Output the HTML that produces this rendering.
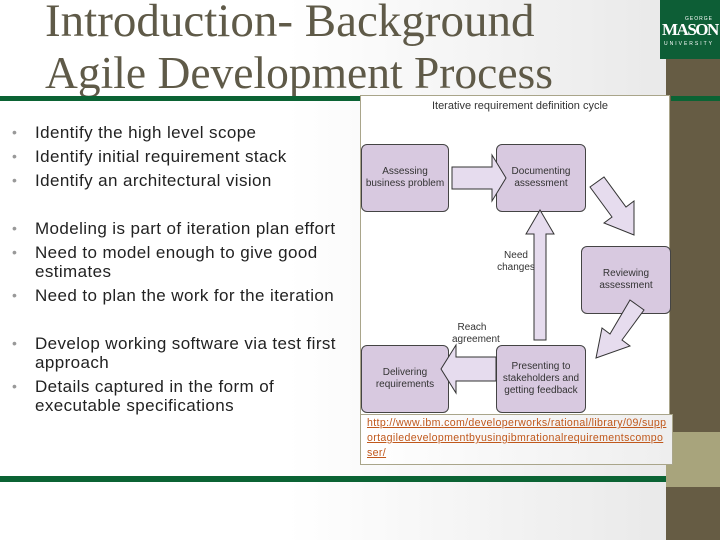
<!DOCTYPE html>
<html><head><meta charset="utf-8"><style>
body{margin:0;width:720px;height:540px;position:relative;overflow:hidden;background:linear-gradient(90deg,#fff 0%,#fff 40%,#e6e6e6 100%);font-family:"Liberation Sans",sans-serif}
.a{position:absolute}
.t{font-family:"Liberation Serif",serif;font-size:45.5px;color:#5f5a48;left:45px;line-height:50px;white-space:nowrap}
.b{position:absolute;left:35px;font-size:17px;letter-spacing:0.4px;color:#222;line-height:19px;width:325px}
.b:before{content:"•";position:absolute;left:-23px;color:#999;font-size:14px}
.box{position:absolute;background:#d8c9e0;border:1px solid #444;border-radius:6px;font-size:10px;text-align:center;color:#333;display:flex;align-items:center;justify-content:center;line-height:12px}
.lbl{position:absolute;font-size:10px;color:#333;text-align:center;line-height:12px}
</style></head><body>
<div class="a t" style="top:-4px;font-size:47px">Introduction- Background</div>
<div class="a t" style="top:48px">Agile Development Process</div>
<div class="a" style="left:0;top:96px;width:362px;height:5px;background:#0b6334"></div>
<div class="a" style="left:660px;top:0;width:60px;height:59px;background:#0d5e36"></div>
<div class="a" style="left:662px;top:20px;color:#fff;font-family:'Liberation Serif',serif;font-weight:bold;font-size:17px;letter-spacing:-1.5px">MASON</div>
<div class="a" style="left:685px;top:16px;color:#fff;font-size:5px;letter-spacing:1px">GEORGE</div>
<div class="a" style="left:664px;top:41px;color:#fff;font-size:5px;letter-spacing:2px">UNIVERSITY</div>
<div class="a" style="left:666px;top:59px;width:54px;height:481px;background:#665c44"></div>
<div class="a" style="left:666px;top:432px;width:54px;height:55px;background:#a8a47c"></div>
<div class="a" style="left:671px;top:96px;width:49px;height:5px;background:#0b6334"></div>
<div class="a" style="left:0;top:476px;width:666px;height:6px;background:#0b6334"></div>

<div class="b" style="top:123px">Identify the high level scope</div>
<div class="b" style="top:147px">Identify initial requirement stack</div>
<div class="b" style="top:171px">Identify an architectural vision</div>
<div class="b" style="top:219px">Modeling is part of iteration plan effort</div>
<div class="b" style="top:243px">Need to model enough to give good estimates</div>
<div class="b" style="top:286px">Need to plan the work for the iteration</div>
<div class="b" style="top:334px">Develop working software via test first approach</div>
<div class="b" style="top:377px">Details captured in the form of executable specifications</div>

<div class="a" style="left:360px;top:95px;width:308px;height:318px;background:#fff;border:1px solid #a9a58a"></div>
<div class="lbl" style="left:420px;top:100px;width:200px;font-size:11px;white-space:nowrap">Iterative requirement definition cycle</div>
<div class="box" style="left:361px;top:144px;width:86px;height:66px">Assessing business problem</div>
<div class="box" style="left:496px;top:144px;width:88px;height:66px">Documenting assessment</div>
<div class="box" style="left:581px;top:246px;width:88px;height:66px">Reviewing assessment</div>
<div class="box" style="left:496px;top:345px;width:88px;height:66px">Presenting to stakeholders and getting feedback</div>
<div class="box" style="left:361px;top:345px;width:86px;height:66px">Delivering requirements</div>
<svg class="a" style="left:360px;top:95px" width="310" height="320">
<g fill="#e6dcee" stroke="#333" stroke-width="1">
<path d="M92 72h40v-12l14 23-14 23v-12h-40z"/>
<path d="M174 245v-106h-8l14-24 14 24h-8v106z"/>
<path d="M136 262h-40v-12l-15 24 15 24v-12h40z"/>
<path d="M230 92l14-10 22 30 8-6 0 34-30-12 8-6z"/>
<path d="M270 205l14 10-22 30 8 6-34 12 6-30 8 6z"/>
</g>
</svg>
<div class="lbl" style="left:496px;top:250px;width:40px">Need changes</div>
<div class="lbl" style="left:452px;top:322px;width:40px">Reach agreement</div>
<div class="a" style="left:360px;top:414px;width:311px;height:49px;border:1px solid #a9a58a;background:linear-gradient(90deg,#fff,#eee)"></div>
<div class="a" style="left:367px;top:416px;width:300px;font-size:10.6px;letter-spacing:0.35px;line-height:15px;color:#c0581c;text-decoration:underline;word-break:break-all;font-family:'Liberation Sans',sans-serif">http://www.ibm.com/developerworks/rational/library/09/supportagiledevelopmentbyusingibmrationalrequirementscomposer/</div>
</body></html>
